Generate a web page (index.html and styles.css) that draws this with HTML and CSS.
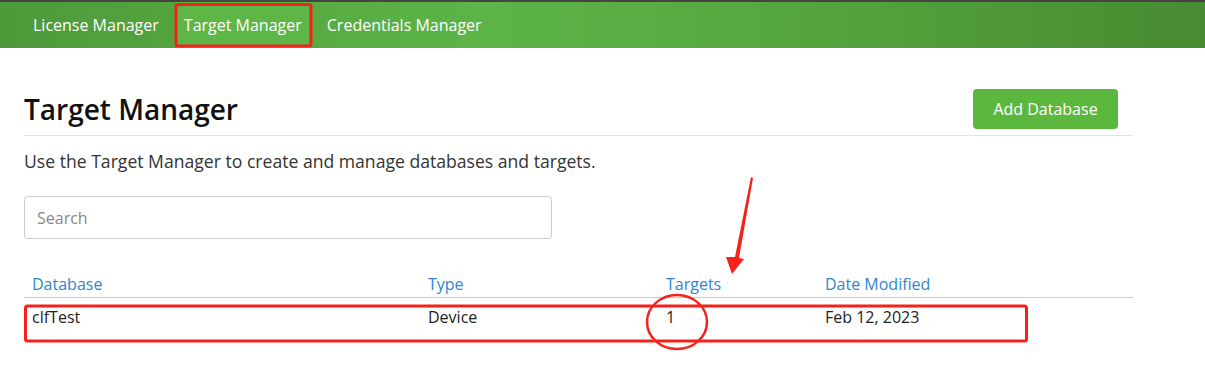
FILE: index.html
```html
<!DOCTYPE html>
<html lang="en">
<head>
  <meta charset="UTF-8">
  <meta name="viewport" content="width=device-width, initial-scale=1.0">
  <title>Target Manager</title>
  <link rel="stylesheet" href="styles.css">
</head>
<body>
  <nav class="navbar">
    <a class="nav-item" href="#">License Manager</a>
    <a class="nav-item active" href="#">Target Manager</a>
    <a class="nav-item" href="#">Credentials Manager</a>
  </nav>

  <main class="content">
    <div class="page-header">
      <h1>Target Manager</h1>
      <button class="button">Add Database</button>
    </div>

    <p class="intro">Use the Target Manager to create and manage databases and targets.</p>

    <input class="search" type="text" placeholder="Search">

    <table class="db-table">
      <thead>
        <tr>
          <th class="col-db">Database</th>
          <th class="col-type">Type</th>
          <th class="col-targets">Targets</th>
          <th>Date Modified</th>
        </tr>
      </thead>
      <tbody>
        <tr>
          <td>clfTest</td>
          <td>Device</td>
          <td>1</td>
          <td>Feb 12, 2023</td>
        </tr>
      </tbody>
    </table>
  </main>

  <!-- screenshot markup drawn over the page -->
  <svg class="markup" width="1205" height="383" viewBox="0 0 1205 383">
    <rect x="176" y="4.5" width="135" height="41.5" rx="2" fill="none" stroke="#f5221b" stroke-width="3"/>
    <rect x="25.5" y="306" width="1001" height="35" rx="2" fill="none" stroke="#f5221b" stroke-width="3"/>
    <ellipse cx="677" cy="322" rx="30" ry="27" fill="none" stroke="#f5221b" stroke-width="2.5"/>
    <polygon points="751,177 753,178 739,258 744,259 732,274 726,257 735,257" fill="#f5221b"/>
  </svg>
</body>
</html>
```

FILE: styles.css
```css
body {
  font-family: 'Open Sans', Arial, sans-serif;
  margin: 0;
  padding: 0;
  background-color: white;
  color: #333;
  border-top: 2px solid #444;
}

.navbar {
  display: flex;
  gap: 9px;
  height: 46px;
  padding-left: 25px;
  background: linear-gradient(to right, #4e993a 0%, #5cb546 40%, #56a63f 65%, #478b31 100%);
}

.nav-item {
  display: flex;
  align-items: center;
  padding: 0 8px;
  color: white;
  font-size: 16px;
  text-decoration: none;
}

.nav-item.active {
  background-color: #5db646;
}

.content {
  width: 1109px;
  margin-left: 24px;
}

.page-header {
  display: flex;
  justify-content: space-between;
  align-items: center;
  padding: 41px 15px 6px 0;
  border-bottom: 1px solid #e3e3e3;
}

h1 {
  margin: 0;
  font-size: 28px;
  font-weight: 600;
  color: #111;
}

.button {
  font-family: inherit;
  background-color: #5cb73e;
  color: white;
  font-size: 16px;
  border: none;
  border-radius: 4px;
  width: 145px;
  height: 40px;
}

.intro {
  font-size: 17.6px;
  margin: 13px 0 23px;
}

.search {
  display: block;
  box-sizing: border-box;
  width: 528px;
  height: 43px;
  padding: 0 12px;
  font-family: inherit;
  font-size: 16px;
  border: 1px solid #ccc;
  border-radius: 4px;
}

.search::placeholder {
  color: #888;
}

.db-table {
  width: 100%;
  margin-top: 32px;
  border-collapse: collapse;
  font-size: 16px;
}

.db-table th {
  text-align: left;
  font-weight: normal;
  color: #2f86cc;
  padding: 2px 8px 2px;
  border-bottom: 1px solid #ccc;
}

.db-table td {
  padding: 8px 8px 10px;
  color: #222;
  vertical-align: top;
}

.col-db { width: 380px; }
.col-type { width: 222px; }
.col-targets { width: 143px; }

.markup {
  position: absolute;
  top: 0;
  left: 0;
  pointer-events: none;
}
```
